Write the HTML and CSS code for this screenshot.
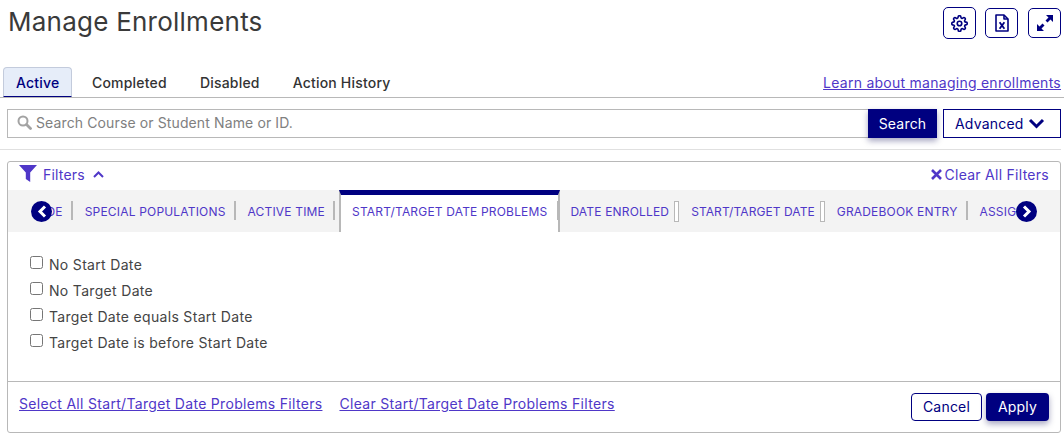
FILE: index.html
```html
<!DOCTYPE html>
<html lang="en">
<head>
  <meta charset="UTF-8" />
  <title>Manage Enrollments</title>
  <link rel="stylesheet" href="styles.css">
</head>
<body>
  <header class="page-head">
    <h1>Manage Enrollments</h1>
    <div class="head-actions">
      <button class="icon-btn icon-btn-tall" aria-label="Settings">
        <svg width="17" height="17" viewBox="0 0 24 24" fill="none" stroke="#000080" stroke-width="2.300" stroke-linejoin="round">
          <circle cx="12" cy="12" r="3.200"/>
          <path d="M19.400 15a1.650 1.650 0 0 0 .33 1.820l.06.06a2 2 0 0 1 0 2.830 2 2 0 0 1-2.830 0l-.06-.06a1.650 1.650 0 0 0-1.820-.33 1.650 1.650 0 0 0-1 1.510V21a2 2 0 0 1-2 2 2 2 0 0 1-2-2v-.09A1.650 1.650 0 0 0 9 19.400a1.650 1.650 0 0 0-1.820.33l-.06.06a2 2 0 0 1-2.830 0 2 2 0 0 1 0-2.830l.06-.06a1.650 1.650 0 0 0 .33-1.820 1.650 1.650 0 0 0-1.510-1H3a2 2 0 0 1-2-2 2 2 0 0 1 2-2h.09A1.650 1.650 0 0 0 4.600 9a1.650 1.650 0 0 0-.33-1.820l-.06-.06a2 2 0 0 1 0-2.830 2 2 0 0 1 2.830 0l.06.06a1.650 1.650 0 0 0 1.820.33H9a1.650 1.650 0 0 0 1-1.510V3a2 2 0 0 1 2-2 2 2 0 0 1 2 2v.09a1.650 1.650 0 0 0 1 1.510 1.650 1.650 0 0 0 1.820-.33l.06-.06a2 2 0 0 1 2.830 0 2 2 0 0 1 0 2.830l-.06.06a1.650 1.650 0 0 0-.33 1.820V9a1.650 1.650 0 0 0 1.510 1H21a2 2 0 0 1 2 2 2 2 0 0 1-2 2h-.09a1.650 1.650 0 0 0-1.510 1z"/>
        </svg>
      </button>
      <button class="icon-btn" aria-label="Export to Excel">
        <svg width="14" height="18" viewBox="0 0 14 18" fill="none" stroke="#000080" stroke-width="1.600" stroke-linejoin="round">
          <path d="M1 1h8l4 4v12H1z"/>
          <path d="M9 1v4h4"/>
          <path d="M4.600 8.200l4.800 6.600M9.400 8.200l-4.800 6.600" stroke-width="1.800"/>
        </svg>
      </button>
      <button class="icon-btn" aria-label="Expand">
        <svg width="16" height="16" viewBox="0 0 16 16" fill="#000080">
          <path d="M9 0h7v7l-2.500-2.500-3 3-2-2 3-3z"/>
          <path d="M7 16H0V9l2.500 2.500 3-3 2 2-3 3z"/>
        </svg>
      </button>
    </div>
  </header>

  <nav class="main-tabs">
    <a class="main-tab active">Active</a>
    <a class="main-tab">Completed</a>
    <a class="main-tab">Disabled</a>
    <a class="main-tab">Action History</a>
    <a class="learn-link">Learn about managing enrollments</a>
  </nav>

  <div class="search-row">
    <div class="search-box">
      <svg class="search-icon" width="15" height="15" viewBox="0 0 15 15" fill="none" stroke="#a3a3a3">
        <circle cx="6" cy="6" r="4.500" stroke-width="2"/>
        <path d="M9.500 9.500l4 4" stroke-width="2.800" stroke-linecap="round"/>
      </svg>
      <span class="search-placeholder">Search Course or Student Name or ID.</span>
    </div>
    <button class="search-btn">Search</button>
    <button class="advanced-btn">Advanced
      <svg width="17" height="11" viewBox="0 0 17 11" fill="none" stroke="#000080" stroke-width="3">
        <path d="M2 2l6.500 6.500L15 2"/>
      </svg>
    </button>
  </div>

  <section class="filters">
    <div class="filters-head">
      <a class="filters-toggle">
        <svg class="funnel" width="18" height="17" viewBox="0 0 18 17" fill="#4f37c8">
          <path d="M0 0h18l-6.800 7.500V17l-4.400-3V7.500z"/>
        </svg>
        <span>Filters</span>
        <svg class="chevron" width="11" height="7" viewBox="0 0 11 7" fill="none" stroke="#4f37c8" stroke-width="2">
          <path d="M1 6l4.500-4.500L10 6"/>
        </svg>
      </a>
      <a class="clear-all">
        <svg width="11" height="11" viewBox="0 0 11 11" fill="none" stroke="#4f37c8" stroke-width="2.600">
          <path d="M1 1l9 9M10 1l-9 9"/>
        </svg>
        Clear All Filters
      </a>
    </div>

    <div class="filter-tabs">
      <div class="filter-tab-clip">
        <div class="filter-tab-list">
          <a class="filter-tab">GRADE</a>
          <a class="filter-tab">SPECIAL POPULATIONS</a>
          <a class="filter-tab">ACTIVE TIME</a>
          <a class="filter-tab current">START/TARGET DATE PROBLEMS</a>
          <a class="filter-tab double">DATE ENROLLED</a>
          <a class="filter-tab double">START/TARGET DATE</a>
          <a class="filter-tab">GRADEBOOK ENTRY</a>
          <a class="filter-tab">ASSIGNMENTS</a>
        </div>
      </div>
      <button class="scroll-arrow scroll-left" aria-label="Scroll left">
        <svg width="10" height="13" viewBox="0 0 10 13" fill="none" stroke="#fff" stroke-width="3">
          <path d="M8 1.500L3 6.500l5 5"/>
        </svg>
      </button>
      <button class="scroll-arrow scroll-right" aria-label="Scroll right">
        <svg width="10" height="13" viewBox="0 0 10 13" fill="none" stroke="#fff" stroke-width="3">
          <path d="M2 1.500l5 5-5 5"/>
        </svg>
      </button>
    </div>

    <div class="filter-options">
      <label class="option"><input type="checkbox" /> No Start Date</label>
      <label class="option"><input type="checkbox" /> No Target Date</label>
      <label class="option"><input type="checkbox" /> Target Date equals Start Date</label>
      <label class="option"><input type="checkbox" /> Target Date is before Start Date</label>
    </div>

    <div class="filters-foot">
      <a class="foot-link">Select All Start/Target Date Problems Filters</a>
      <a class="foot-link">Clear Start/Target Date Problems Filters</a>
      <div class="foot-buttons">
        <button class="cancel-btn">Cancel</button>
        <button class="apply-btn">Apply</button>
      </div>
    </div>
  </section>
</body>
</html>
```

FILE: styles.css
```css
* {
  box-sizing: border-box;
}
html, body {
  height: 100%;
}
body {
  margin: 0;
  padding: 0 3px 0 0;
  font-family: Inter, "Liberation Sans", sans-serif;
  font-size: 14px;
  color: #333;
  background: #fff;
  overflow: hidden;
}
button {
  font-family: inherit;
  cursor: pointer;
}
a {
  cursor: pointer;
}

.page-head {
  display: flex;
  justify-content: space-between;
  height: 67px;
  padding: 7px 0 0 8px;
}
h1 {
  margin: 0;
  font-size: 26px;
  line-height: 30px;
  font-weight: 400;
  letter-spacing: 0.24px;
  color: #3a3a3a;
}
.head-actions {
  display: flex;
  gap: 10px;
  align-items: flex-start;
}
.icon-btn {
  display: flex;
  align-items: center;
  justify-content: center;
  width: 33px;
  height: 30px;
  margin-top: 1px;
  padding: 0;
  background: #fff;
  border: 1px solid #000080;
  border-radius: 5px;
}
.icon-btn-tall {
  height: 32px;
  margin-top: 0;
  margin-right: -1px;
}

.main-tabs {
  display: flex;
  align-items: stretch;
  height: 31px;
  margin-right: -3px;
  padding: 0 3px;
  border-bottom: 1px solid #b8b8b8;
}
.main-tab {
  display: flex;
  align-items: center;
  padding: 0 13px;
  margin-right: 7px;
  font-size: 14px;
  font-weight: 500;
  letter-spacing: 0.2px;
  color: #333;
}
.main-tab.active {
  width: 69px;
  padding: 0 12px;
  background: #e6edf9;
  color: #000080;
  border: 1px solid #c3cbdc;
  border-bottom: 1px solid #000080;
  border-radius: 4px 4px 0 0;
}
.learn-link {
  margin-left: auto;
  padding-top: 7px;
  font-size: 14px;
  letter-spacing: 0.26px;
  color: #4f37c8;
  text-decoration: underline;
}

.search-row {
  display: flex;
  height: 41px;
  margin-top: 11px;
  padding: 0 0 11px 7px;
  border-bottom: 1px solid #e0e0e0;
}
.search-box {
  flex: 1;
  display: flex;
  align-items: center;
  gap: 4px;
  padding: 0 0 2px 9px;
  border: 1px solid #b8b8b8;
  border-right: none;
}
.search-placeholder {
  color: #808080;
  letter-spacing: 0.12px;
}
.search-btn {
  width: 69px;
  padding: 0;
  font-size: 14px;
  letter-spacing: 0.2px;
  color: #fff;
  background: #000080;
  border: none;
  box-shadow: 0 3px 6px rgba(0, 0, 80, 0.35);
}
.advanced-btn {
  display: flex;
  align-items: center;
  gap: 4px;
  width: 118px;
  margin-left: 6px;
  padding: 0 0 0 11px;
  font-size: 14px;
  letter-spacing: 0.2px;
  color: #000080;
  background: #fff;
  border: 1px solid #000080;
}

.filters {
  margin: 11px 0 0 7px;
  height: 272px;
  display: flex;
  flex-direction: column;
  border: 1px solid #b8b8b8;
  border-radius: 3px;
}
.filters-head {
  display: flex;
  justify-content: space-between;
  align-items: center;
  height: 28px;
  padding: 0 11px 4px;
  color: #4f37c8;
}
.filters-toggle {
  display: flex;
  align-items: center;
  gap: 6px;
  letter-spacing: 0.2px;
}
.funnel {
  margin-bottom: 1px;
}
.chevron {
  margin-left: 2px;
}
.clear-all {
  display: flex;
  align-items: center;
  gap: 3px;
  letter-spacing: 0.27px;
}

.filter-tabs {
  position: relative;
  height: 42px;
  background: #f3f3f3;
}
.filter-tab-clip {
  height: 100%;
  margin: 0 33px 0 34px;
  overflow: hidden;
}
.filter-tab-list {
  display: flex;
  height: 100%;
  margin-left: -33px;
  white-space: nowrap;
}
.filter-tab {
  position: relative;
  display: flex;
  align-items: center;
  padding: 0 10px 0 12px;
  font-size: 12px;
  letter-spacing: 0.18px;
  color: #4f37c8;
}
.filter-tab::after {
  content: "";
  position: absolute;
  right: 0;
  top: 11px;
  width: 2px;
  height: 19px;
  background: #b8b8b8;
}
.filter-tab.double::after {
  width: 3px;
  background: #fff;
  border: 1px solid #b8b8b8;
}
.filter-tab.double + .filter-tab.double {
  letter-spacing: 0.07px;
}
.filter-tab.current {
  margin-left: 4px;
  padding: 0 11px 5px 11px;
  background: #fff;
  border-top: 5px solid #000080;
  border-left: 2px solid #b8b8b8;
  border-right: 2px solid #b8b8b8;
}
.filter-tab.current::after {
  top: 6px;
  width: 1px;
}
.filter-tab.current + .filter-tab {
  padding-left: 10px;
}
.scroll-arrow {
  position: absolute;
  top: 11px;
  width: 21px;
  height: 21px;
  display: flex;
  align-items: center;
  justify-content: center;
  padding: 0;
  background: #000080;
  border: none;
  border-radius: 50%;
}
.scroll-left {
  left: 23px;
}
.scroll-right {
  right: 23px;
}

.filter-options {
  flex: 1;
  padding: 23px 0 0 22px;
  display: flex;
  flex-direction: column;
  gap: 8px;
}
.option {
  display: flex;
  align-items: center;
  gap: 6px;
  height: 18px;
  font-size: 14px;
  letter-spacing: 0.32px;
  color: #444;
}
.option input {
  width: 13px;
  height: 13px;
  margin: 0 0 3px 0;
}

.filters-foot {
  display: flex;
  align-items: flex-start;
  gap: 17px;
  height: 51px;
  padding: 11px 11px 0;
  border-top: 1px solid #b8b8b8;
}
.foot-link {
  padding-top: 2px;
  font-size: 14px;
  letter-spacing: 0.31px;
  color: #4f37c8;
  text-decoration: underline;
}
.foot-buttons {
  display: flex;
  gap: 4px;
  margin-left: auto;
}
.cancel-btn, .apply-btn {
  height: 28px;
  padding: 0 0 1px;
  font-size: 14px;
  letter-spacing: 0.2px;
  border-radius: 4px;
}
.cancel-btn {
  width: 71px;
  color: #000080;
  background: #fff;
  border: 1px solid #000080;
}
.apply-btn {
  width: 63px;
  color: #fff;
  background: #000080;
  border: none;
  box-shadow: 0 3px 6px rgba(0, 0, 80, 0.35);
}
```
